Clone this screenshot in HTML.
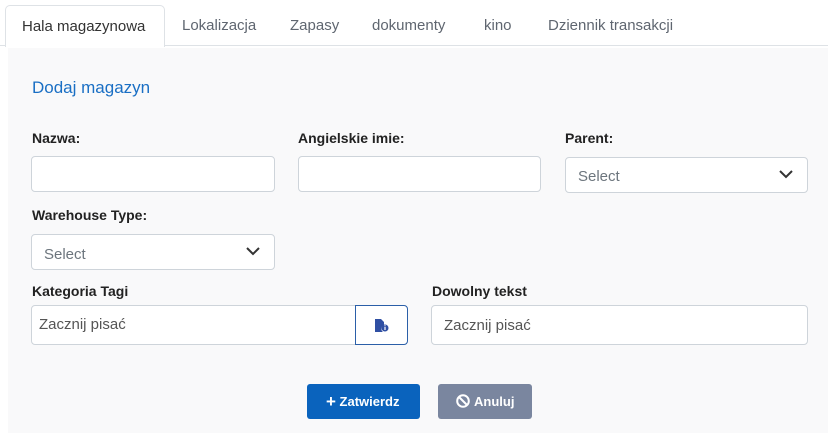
<!DOCTYPE html>
<html><head><style>
*{box-sizing:border-box;margin:0;padding:0}
body{width:828px;height:433px;overflow:hidden;background:#fff;font-family:"Liberation Sans",sans-serif;position:relative}
.tabs{position:absolute;left:0;top:0;width:828px;height:46px;border-bottom:1px solid #dee2e6}
.tab{position:absolute;top:17px;font-size:15px;color:#5f6670}
.act{position:absolute;left:5px;top:5px;width:160px;height:42px;border:1px solid #dee2e6;border-bottom:none;border-radius:5px 5px 0 0;background:#fff;color:#333;font-size:15px;padding:12px 0 0 16px}
.panel{position:absolute;left:8px;top:48px;width:820px;height:385px;background:#f9f9fa}
.a{position:absolute}
.lbl{position:absolute;font-size:14px;font-weight:bold;color:#222}
.in{position:absolute;background:#fff;border:1px solid #ced4da;border-radius:4px;font-size:15px;color:#6c757d}
.chev{position:absolute;right:14px;top:12px}
</style></head><body>
<div class="tabs"></div>
<div class="act">Hala magazynowa</div>
<div class="tab" style="left:182px">Lokalizacja</div>
<div class="tab" style="left:290px">Zapasy</div>
<div class="tab" style="left:372px">dokumenty</div>
<div class="tab" style="left:484px">kino</div>
<div class="tab" style="left:548px">Dziennik transakcji</div>
<div class="panel"></div>
<div class="a" style="left:32px;top:78px;font-size:17px;color:#1a6fc4">Dodaj magazyn</div>
<div class="lbl" style="left:32px;top:130px">Nazwa:</div>
<div class="lbl" style="left:298px;top:130px">Angielskie imie:</div>
<div class="lbl" style="left:565px;top:130px">Parent:</div>
<div class="in" style="left:31px;top:156px;width:244px;height:36px"></div>
<div class="in" style="left:298px;top:156px;width:243px;height:36px"></div>
<div class="in" style="left:565px;top:157px;width:243px;height:36px;padding:10px 0 0 12px">Select<svg class="chev" width="14" height="9" viewBox="0 0 14 9"><path d="M1 1l6 6 6-6" fill="none" stroke="#333" stroke-width="2"/></svg></div>
<div class="lbl" style="left:32px;top:207px">Warehouse Type:</div>
<div class="in" style="left:31px;top:234px;width:244px;height:36px;padding:11px 0 0 12px">Select<svg class="chev" width="14" height="9" viewBox="0 0 14 9"><path d="M1 1l6 6 6-6" fill="none" stroke="#333" stroke-width="2"/></svg></div>
<div class="lbl" style="left:32px;top:283px">Kategoria Tagi</div>
<div class="lbl" style="left:432px;top:283px">Dowolny tekst</div>
<div class="in" style="left:31px;top:305px;width:325px;height:40px;border-radius:4px 0 0 4px;padding:10px 0 0 7px;color:#555">Zacznij pisać</div>
<div class="in" style="left:355px;top:305px;width:53px;height:40px;border:1px solid #2b5fa8;border-radius:0 4px 4px 0">
<svg style="position:absolute;left:19px;top:13px" width="14" height="13" viewBox="0 0 14 13"><path d="M0 0h6l3 3v3a4 4 0 0 0-1 7H0z" fill="#2f4fa3"/><circle cx="10" cy="9" r="3.5" fill="#2f4fa3"/><rect x="9.4" y="8" width="1.2" height="3" fill="#fff"/><rect x="9.4" y="6.3" width="1.2" height="1" fill="#fff"/></svg></div>
<div class="in" style="left:431px;top:305px;width:377px;height:40px;padding:11px 0 0 12px;color:#555">Zacznij pisać</div>
<div class="a" style="left:307px;top:384px;width:113px;height:35px;background:#0a63bd;border-radius:3px;color:#fff;font-size:13px;font-weight:bold;padding:10px 0 0 19px"><span style="font-size:17px;position:relative;top:1px;line-height:0">+</span> Zatwierdz</div>
<div class="a" style="left:438px;top:384px;width:94px;height:35px;background:#7a869f;border-radius:3px;color:#fff;font-size:13px;font-weight:bold;padding:10px 0 0 18px"><svg style="position:absolute;left:18px;top:10px" width="14" height="14" viewBox="0 0 14 14"><circle cx="7" cy="7" r="5.8" fill="none" stroke="#fff" stroke-width="2"/><path d="M3 3l8 8" stroke="#fff" stroke-width="2"/></svg><span style="margin-left:18px">Anuluj</span></div>
</body></html>
